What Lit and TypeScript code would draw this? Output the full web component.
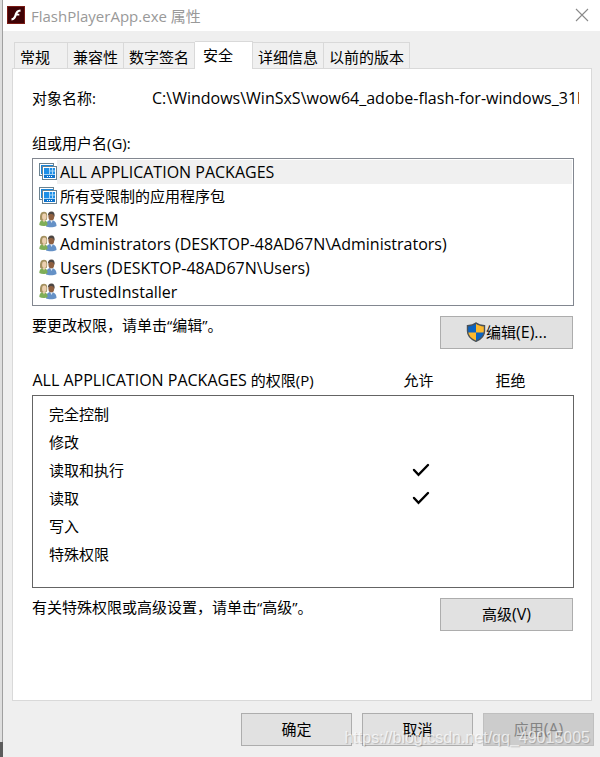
import { LitElement, html, css } from "lit";
import { customElement, state } from "lit/decorators.js";
import { classMap } from "lit/directives/class-map.js";

type Principal = { name: string; kind: "package" | "group"; latin: boolean };

const TABS = ["常规", "兼容性", "数字签名", "安全", "详细信息", "以前的版本"];

const PRINCIPALS: Principal[] = [
  { name: "ALL APPLICATION PACKAGES", kind: "package", latin: true },
  { name: "所有受限制的应用程序包", kind: "package", latin: false },
  { name: "SYSTEM", kind: "group", latin: true },
  { name: "Administrators (DESKTOP-48AD67N\\Administrators)", kind: "group", latin: true },
  { name: "Users (DESKTOP-48AD67N\\Users)", kind: "group", latin: true },
  { name: "TrustedInstaller", kind: "group", latin: true },
];

const PERMISSIONS = [
  { name: "完全控制", allow: false, deny: false },
  { name: "修改", allow: false, deny: false },
  { name: "读取和执行", allow: true, deny: false },
  { name: "读取", allow: true, deny: false },
  { name: "写入", allow: false, deny: false },
  { name: "特殊权限", allow: false, deny: false },
];

const flashIcon = html`<svg class="flash" width="18" height="18" viewBox="0 0 18 18" aria-hidden="true">
  <rect width="18" height="18" fill="#7a1a14" />
  <rect x="1" y="1" width="16" height="16" fill="#3f0205" />
  <path d="M13.500 3.500v2.200c-1.700 0-2.400.6-3 2h1.800v1.800H9.700C8.700 12.500 7.500 14.200 4.500 14.500v-2.200c1.700-.3 2.300-1.300 3-3.300 1.100-3.200 2.300-5.300 6-5.500z" fill="#fff" />
</svg>`;

const packageIcon = html`<svg width="18" height="18" viewBox="0 0 18 18" aria-hidden="true">
  <rect x="0.500" y="0.500" width="14" height="12" fill="#fff" stroke="#6b8290" />
  <rect x="2" y="2" width="12" height="9" fill="#1a86da" />
  <rect x="3.500" y="3.500" width="14" height="13" fill="#fff" stroke="#6b8290" />
  <rect x="5" y="5" width="11" height="10" fill="#a9d6f7" />
  <path d="M5 5h5v6H5z" fill="#1f8fe6" />
  <path d="M11 5h2v2.500h-2zM14 5h2v2.500h-2zM11 8.500h2V11h-2zM14 8.500h2V11h-2z" fill="#1f8fe6" />
  <path d="M5 12h11v3H5z" fill="#0f74cc" />
  <path d="M8 13.500h1M10 13.500h1M12 13.500h1" stroke="#fff" />
</svg>`;

const groupIcon = html`<svg width="18" height="18" viewBox="0 0 18 18" aria-hidden="true">
  <path d="M7 15.500c0-4 1.500-6.500 5-6.500s5.500 2.500 5.500 6c-2 1.400-8 1.600-10.500.5z" fill="#6591c6" />
  <path d="M11 9l1.500 3L14 9z" fill="#dce8f4" />
  <ellipse cx="12.300" cy="5.400" rx="2.900" ry="3.900" fill="#8f6040" />
  <path d="M9 5c-.3-3 1-4.500 3.500-4.500S16 2.500 15.500 6c-.6-2-1.500-3-3-3S9.700 3.500 9 5z" fill="#4c4642" />
  <path d="M.3 14c0-3 1.300-5 4-5 3 0 4.300 2 4.300 5-2 1.300-6 1.300-8.300 0z" fill="#7fae58" />
  <path d="M1.200 9C.6 4 1.500.8 5 .8S8.600 4 8 8.500c-1.500 1-5 1.500-6.800.5z" fill="#a39160" />
  <ellipse cx="5.300" cy="5.800" rx="2.200" ry="3.200" fill="#ecd0b0" />
  <path d="M3.500 9h3L5 11.500z" fill="#ecd0b0" />
</svg>`;

const shieldIcon = html`<svg width="20" height="20" viewBox="0 0 20 20" aria-hidden="true">
  <path d="M10 1C8 2.700 5 3.600 1.500 3.700V9c0 5 3.500 8.200 8.500 10.300z" fill="#0b63c0" />
  <path d="M10 1c2 1.700 5 2.600 8.500 2.700V9c0 5-3.500 8.200-8.500 10.300z" fill="#fdb92c" />
  <path d="M1.600 10.500H10v8.800C5.200 17.300 2.200 14.600 1.600 10.500z" fill="#fdb92c" />
  <path d="M10 10.500h8.400c-.6 4.100-3.600 6.800-8.400 8.800z" fill="#0b63c0" />
  <path d="M10 1C8 2.700 5 3.600 1.500 3.700V9c0 5 3.500 8.200 8.500 10.300 5-2.100 8.500-5.300 8.500-10.300V3.700C15 3.600 12 2.700 10 1z" fill="none" stroke="#4b5258" stroke-width="1.400" />
</svg>`;

const tick = html`<svg class="tick" width="18" height="14" viewBox="0 0 18 14" role="img" aria-label="是">
  <path d="M2 7l4.500 4.800L16 2" fill="none" stroke="#000" stroke-width="2.400" stroke-linecap="round" />
</svg>`;

@customElement("app-root")
export class AppRoot extends LitElement {
  @state() private tab = 3;
  @state() private selected = 0;

  static styles = css`
    :host {
      display: block;
      font: 15px/20px "Open Sans", "Noto Sans CJK SC", sans-serif;
      color: #000;
    }
    * { box-sizing: border-box; }
    button, input { font: inherit; color: inherit; }
    .latin { font-size: 16px; }
    .stage {
      display: flex;
      min-height: 100vh;
      background: #efefef;
    }
    .edge {
      flex: none;
      display: flex;
      flex-direction: column;
      width: 3px;
    }
    .edge-light {
      flex: 1;
      background: #dedede;
      border-right: 1px solid #a0a0a0;
    }
    .edge-dark { height: 15px; background: #5c5c5c; }
    .dialog {
      position: relative;
      flex: 1;
      min-width: 0;
      display: flex;
      flex-direction: column;
    }
    .title {
      display: flex;
      align-items: center;
      gap: 6px;
      height: 31px;
      padding: 0 11px 2px 4px;
      background: #fff;
      color: #999;
    }
    .title h1 { flex: 1; margin: 0; padding-top: 2px; font: inherit; }
    .close {
      display: flex;
      padding: 0;
      border: 0;
      background: none;
    }
    .body {
      flex: 1;
      display: flex;
      flex-direction: column;
      padding: 10px 8px 0 9px;
    }
    .tabs {
      display: flex;
      align-items: flex-end;
      padding-left: 2px;
    }
    .tab {
      height: 26px;
      padding: 2px 5px 0;
      border: 1px solid #d9d9d9;
      border-width: 1px 1px 0 0;
      background: #f0f0f0;
      line-height: 22px;
      white-space: nowrap;
    }
    .tab:first-child { border-left-width: 1px; padding-right: 17px; }
    .tab.active {
      height: 28px;
      margin-bottom: -1px;
      padding: 0 19px 2px 8px;
      background: #fff;
      z-index: 1;
    }
    .panel {
      flex: 1;
      padding: 19px 17px 0 19px;
      border: 1px solid #d9d9d9;
      background: #fff;
    }
    .object { display: flex; height: 20px; }
    .object label { flex: none; width: 120px; }
    .object input {
      flex: 1;
      min-width: 0;
      height: 20px;
      margin-right: -5px;
      padding: 0;
      border: 0;
      outline: 0;
      background: none;
      font-size: 16px;
    }
    .groups-label { margin: 25px 0 5px; }
    .list {
      margin: 0;
      padding: 1px;
      height: 148px;
      border: 1px solid #828790;
      list-style: none;
    }
    .row {
      display: flex;
      align-items: center;
      height: 24px;
      padding-left: 5px;
      line-height: 24px;
      white-space: nowrap;
    }
    .row .name { flex: 1; padding-left: 3px; }
    .row.selected .name { background: #f0f0f0; }
    .hint {
      display: flex;
      justify-content: space-between;
      align-items: flex-start;
      padding-top: 10px;
    }
    .hint p { margin: 0; line-height: 18px; }
    .push {
      display: flex;
      align-items: center;
      justify-content: center;
      height: 33px;
      padding: 0 0 1px;
      border: 1px solid #adadad;
      background: #e1e1e1;
    }
    .hint .push { width: 133px; margin-right: 1px; }
    .perms {
      width: 100%;
      margin-top: 17px;
      border-collapse: collapse;
      table-layout: fixed;
    }
    .perms th { padding: 0; font-weight: 400; text-align: left; }
    .perms thead th { height: 29px; }
    .perms .mark { width: 92px; text-align: center; }
    .perms thead .last { width: 109px; padding-right: 17px; }
    .perms tbody { border: 1px solid #646464; }
    .perms td { padding: 0 0 0 5px; }
    .perms tbody th { height: 28px; padding-left: 16px; }
    .perms tbody tr:first-child > * { height: 33px; padding-top: 5px; }
    .perms tbody tr:last-child > * { height: 47px; padding-bottom: 19px; }
    .tick { display: block; margin: 0 auto; }
    .actions {
      display: flex;
      justify-content: flex-end;
      gap: 10px;
      margin-right: -2px;
      padding: 12px 0 11px;
    }
    .actions .push { width: 111px; }
    .push:disabled {
      border-color: #bfbfbf;
      background: #ccc;
      color: #838383;
    }
    .watermark {
      position: absolute;
      right: 10px;
      bottom: 9px;
      font: 16px/20px "Liberation Sans", sans-serif;
      color: rgba(255, 255, 255, 0.7);
      text-shadow: 1px 1px 1px rgba(0, 0, 0, 0.2);
      pointer-events: none;
    }
  `;

  render() {
    const current = PRINCIPALS[this.selected];
    return html`<div class="stage">
      <div class="edge"><div class="edge-light"></div><div class="edge-dark"></div></div>
      <main class="dialog">
        <header class="title">
          ${flashIcon}
          <h1>FlashPlayerApp.exe 属性</h1>
          <button class="close" aria-label="关闭">
            <svg width="14" height="14" viewBox="0 0 14 14" aria-hidden="true">
              <path d="M1 1l12 12M13 1L1 13" stroke="#8a8a8a" stroke-width="1.100" />
            </svg>
          </button>
        </header>
        <div class="body">
          <div class="tabs" role="tablist">
            ${TABS.map((t, i) => html`<button role="tab" aria-selected=${i === this.tab}
              class=${classMap({ tab: true, active: i === this.tab })}
              @click=${() => (this.tab = i)}>${t}</button>`)}
          </div>
          <section class="panel" role="tabpanel">
            <div class="object">
              <label for="object">对象名称:</label>
              <input id="object" readonly value="C:\\Windows\\WinSxS\\wow64_adobe-flash-for-windows_31b" />
            </div>
            <div class="groups-label" id="groups">组或用户名(G):</div>
            <ul class="list" role="listbox" aria-labelledby="groups">
              ${PRINCIPALS.map((p, i) => html`<li role="option" aria-selected=${i === this.selected}
                class=${classMap({ row: true, latin: p.latin, selected: i === this.selected })}
                @click=${() => (this.selected = i)}>
                ${p.kind === "package" ? packageIcon : groupIcon}<span class="name">${p.name}</span>
              </li>`)}
            </ul>
            <div class="hint">
              <p>要更改权限，请单击“编辑”。</p>
              <button class="push">${shieldIcon}<span>编辑<span class="latin">(E)...</span></span></button>
            </div>
            <table class="perms">
              <thead>
                <tr>
                  <th scope="col"><span class=${classMap({ latin: current.latin })}>${current.name}</span> 的权限(P)</th>
                  <th scope="col" class="mark">允许</th>
                  <th scope="col" class="mark last">拒绝</th>
                </tr>
              </thead>
              <tbody>
                ${PERMISSIONS.map((p) => html`<tr>
                  <th scope="row">${p.name}</th>
                  <td class="mark">${p.allow ? tick : ""}</td>
                  <td class="mark">${p.deny ? tick : ""}</td>
                </tr>`)}
              </tbody>
            </table>
            <div class="hint">
              <p>有关特殊权限或高级设置，请单击“高级”。</p>
              <button class="push"><span>高级<span class="latin">(V)</span></span></button>
            </div>
          </section>
          <footer class="actions">
            <button class="push">确定</button>
            <button class="push">取消</button>
            <button class="push" disabled><span>应用<span class="latin">(A)</span></span></button>
          </footer>
        </div>
        <div class="watermark">https://blog.csdn.net/qq_49015005</div>
      </main>
    </div>`;
  }
}
